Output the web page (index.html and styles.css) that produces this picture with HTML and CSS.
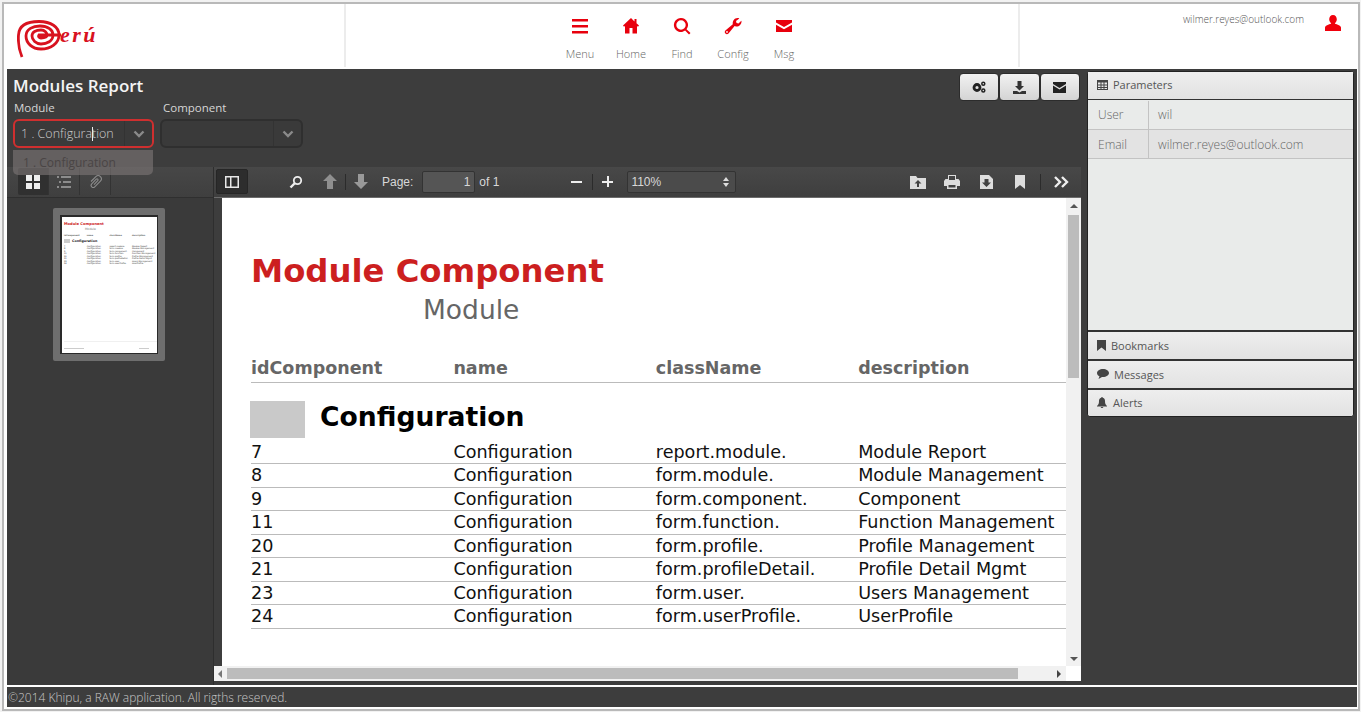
FILE: index.html
```html
<!DOCTYPE html>
<html lang="en">
<head>
  <meta charset="UTF-8">
  <meta name="viewport" content="width=device-width, initial-scale=1.0">
  <link rel="stylesheet" href="styles.css">
  <title>Modules Report</title>
</head>
<body>

<div class="frame">

  <header class="topbar">
    <div class="logo">
      <svg width="44" height="38" viewBox="0 0 44 38">
        <path d="M5 37 C2 30 1 22 1.500 15 C2 5 10 1.500 22 1.500 C34 1.500 42 7 42 15 C42 24 33 29 24 29 C15 29 9 23 9 16 C9 9 16 6 23 6 C31 6 36 10 36 15 C36 21 30 24 24 24 C19 24 15 20 15 16 C15 12 19 10 24 10 C28 10 30 13 30 15 C30 17 27 18 24 18 C22 18 21 16.500 22 15 L44 15" fill="none" stroke="#d8121f" stroke-width="2.800"/>
      </svg>
      <span class="logo-text">erú</span>
    </div>
    <nav class="mainnav">
      <a class="navitem">
        <svg class="navicon" viewBox="0 0 18 18"><path d="M1 2h16v2.600H1zM1 8h16v2.600H1zM1 14h16v2.600H1z"/></svg>
        <span>Menu</span>
      </a>
      <a class="navitem">
        <svg class="navicon" viewBox="0 0 18 18"><path d="M9 1 1 8.500l1 1.200L3 9v7.500h4.500V11h3v5.500H15V9l1 .7 1-1.200-2.500-2.300V2h-2v2.400z"/></svg>
        <span>Home</span>
      </a>
      <a class="navitem">
        <svg class="navicon" viewBox="0 0 18 18"><path fill-rule="evenodd" d="M8 1a7 7 0 0 1 5.500 11.300L17.500 16 16 17.500l-3.900-3.900A7 7 0 1 1 8 1zm0 2.300a4.700 4.700 0 1 0 0 9.400 4.700 4.700 0 0 0 0-9.400z"/></svg>
        <span>Find</span>
      </a>
      <a class="navitem">
        <svg class="navicon" viewBox="0 0 18 18"><path fill-rule="evenodd" d="M17.500 4.500c0 3-2.500 5.300-5.500 5-.5 0-1-.2-1.400-.4L4.500 16.600c-.9.900-2.300.9-3.100 0-.9-.9-.8-2.200 0-3l7.400-6.300C8.300 4 10.500 1 13.500 1c.8 0 1.300.1 1.800.4L12 4l.5 2 2 .5 2.800-2.700c.1.200.2.400.2.700zM3 14a.9.9 0 1 0 0 1.800A.9.9 0 0 0 3 14z"/></svg>
        <span>Config</span>
      </a>
      <a class="navitem">
        <svg class="navicon" viewBox="0 0 18 18"><path d="M1 3h16v2.500L9 10 1 5.500zM1 7.800 9 12.300l8-4.500V15H1z"/></svg>
        <span>Msg</span>
      </a>
    </nav>
    <div class="userbox">
      <span class="useremail">wilmer.reyes@outlook.com</span>
      <svg class="usericon" viewBox="0 0 16 16"><path d="M8 0c2.400 0 3.800 2 3.800 4.300 0 1.700-.8 3.200-2 4 .3 1.200 5.700 1.400 6.200 4.200V16H0v-3.500c.5-2.800 5.900-3 6.200-4.200-1.200-.8-2-2.300-2-4C4.200 2 5.600 0 8 0z"/></svg>
    </div>
  </header>

  <main class="workspace">

    <section class="report">
      <div class="report-head">
        <div class="report-filters">
          <h1 class="report-title">Modules Report</h1>
          <div class="filters">
            <div class="field field-module">
              <label>Module</label>
              <div class="combo combo-active">
                <span class="combo-value">1 . Configura<i class="caret"></i>tion</span>
                <span class="combo-arrow"><svg width="12" height="8" viewBox="0 0 12 8"><path d="M1.500 1.500 6 6l4.500-4.500" fill="none" stroke="#8a8a8a" stroke-width="2.400"/></svg></span>
              </div>
            </div>
            <div class="field">
              <label>Component</label>
              <div class="combo">
                <span class="combo-value"></span>
                <span class="combo-arrow"><svg width="12" height="8" viewBox="0 0 12 8"><path d="M1.500 1.500 6 6l4.500-4.500" fill="none" stroke="#8a8a8a" stroke-width="2.400"/></svg></span>
              </div>
            </div>
          </div>
        </div>
        <div class="actions">
          <button class="actionbtn"><svg width="14" height="12" viewBox="0 0 14 12"><circle cx="5" cy="6.500" r="3" fill="none" stroke="#222" stroke-width="2.800"/><circle cx="11.300" cy="2.700" r="1.500" fill="none" stroke="#222" stroke-width="1.500"/><circle cx="11.300" cy="9.400" r="1.500" fill="none" stroke="#222" stroke-width="1.500"/></svg></button>
          <button class="actionbtn"><svg width="13" height="13" viewBox="0 0 13 13"><path d="M4.500 0h4v5H11L6.500 9.500 2 5h2.500zM0 10h4l2.500 1.500L9 10h4v3H0z" fill="#333"/></svg></button>
          <button class="actionbtn"><svg width="13" height="11" viewBox="0 0 13 11"><path d="M0 0h13v2L6.500 6 0 2zM0 3.500 6.500 7.500 13 3.500V11H0z" fill="#222"/></svg></button>
        </div>
      </div>

      <div class="dropdown">1 . Configuration</div>

      <div class="viewer">
        <aside class="sidebar">
          <div class="sidebar-tools">
            <span class="sidetool sidetool-on"><svg width="14" height="14" viewBox="0 0 14 14"><path d="M0 0h6v6H0zM8 0h6v6H8zM0 8h6v6H0zM8 8h6v6H8z" fill="#eee"/></svg></span>
            <span class="sidetool"><svg width="14" height="14" viewBox="0 0 14 14"><path d="M0 1h2v2H0zM4 1h10v2H4zM2 6h2v2H2zM6 6h8v2H6zM0 11h2v2H0zM4 11h10v2H4z" fill="#8c8c8c"/></svg></span>
            <span class="sidetool"><svg width="17" height="17" viewBox="0 0 16 16"><path d="M5 11V4.500a3 3 0 0 1 6 0V12a2 2 0 0 1-4 0V6a1 1 0 0 1 2 0v5" fill="none" stroke="#8c8c8c" stroke-width="1" transform="rotate(45 8 8)"/></svg></span>
          </div>
          <div class="thumbs">
            <div class="thumb">
              <div class="thumb-page">
                <div class="thumb-title">Module Component</div>
                <div class="thumb-sub">Module</div>
                <div class="thumb-row thumb-head"><span>idComponent</span><span>name</span><span>className</span><span>description</span></div>
                <div class="thumb-group"><i></i>Configuration</div>
                <div class="thumb-row"><span>7</span><span>Configuration</span><span>report.module.</span><span>Module Report</span></div>
                <div class="thumb-row"><span>8</span><span>Configuration</span><span>form.module.</span><span>Module Management</span></div>
                <div class="thumb-row"><span>9</span><span>Configuration</span><span>form.component.</span><span>Component</span></div>
                <div class="thumb-row"><span>11</span><span>Configuration</span><span>form.function.</span><span>Function Management</span></div>
                <div class="thumb-row"><span>20</span><span>Configuration</span><span>form.profile.</span><span>Profile Management</span></div>
                <div class="thumb-row"><span>21</span><span>Configuration</span><span>form.profileDetail.</span><span>Profile Detail Mgmt</span></div>
                <div class="thumb-row"><span>23</span><span>Configuration</span><span>form.user.</span><span>Users Management</span></div>
                <div class="thumb-row"><span>24</span><span>Configuration</span><span>form.userProfile.</span><span>UserProfile</span></div>
                <div class="thumb-foot"><i></i><i></i></div>
              </div>
            </div>
          </div>
        </aside>

        <div class="docpane">
          <div class="doctools">
            <span class="toolbtn toolbtn-on"><svg width="14" height="14" viewBox="0 0 14 14"><path fill-rule="evenodd" d="M0 1h14v12H0zM1.500 2.500v9h3.500v-9zM6.500 2.500v9H12.500v-9z" fill="#e8e8e8"/></svg></span>
            <svg class="tool-find" width="14" height="14" viewBox="0 0 14 14"><circle cx="8.500" cy="5.500" r="3.700" fill="none" stroke="#eee" stroke-width="1.800"/><path d="M6 8 1.500 12.500" stroke="#eee" stroke-width="2.400"/></svg>
            <svg class="tool-up" width="16" height="15" viewBox="0 0 16 15"><path d="M8 0l7 7h-4v8H5V7H1z" fill="#8f8f8f"/></svg>
            <i class="toolsep"></i>
            <svg class="tool-down" width="16" height="15" viewBox="0 0 16 15"><path d="M8 15l7-7h-4V0H5v8H1z" fill="#999"/></svg>
            <label class="pagelabel">Page:</label>
            <span class="pagebox">1</span>
            <span class="pagecount">of 1</span>
            <span class="zoomout"></span>
            <i class="toolsep toolsep-zoom"></i>
            <span class="zoomin"></span>
            <span class="scalebox">110%<svg width="6" height="10" viewBox="0 0 6 10"><path d="M3 0l3 4H0zM3 10 0 6h6z" fill="#ddd"/></svg></span>
            <span class="toolspace"></span>
            <svg class="tool-right" width="16" height="14" viewBox="0 0 16 14"><path fill-rule="evenodd" d="M0 1h6l1.500 2H16v11H0zM8 5 4.500 8.500H7V12h2V8.500h2.500z" fill="#ddd"/></svg>
            <svg class="tool-right tool-print" width="16" height="14" viewBox="0 0 16 14"><path fill-rule="evenodd" d="M4 0h8v4h2.500L16 6v5h-3v3H3v-3H0V6l1.500-2H4zM5 1v4h6V1zM4.500 10v2.500h7V10z" fill="#ddd"/></svg>
            <svg class="tool-right tool-file" width="13" height="14" viewBox="0 0 13 14"><path fill-rule="evenodd" d="M0 0h9l4 4v10H0zM4.500 4v3.500H2L6.500 12 11 7.500H8.500V4z" fill="#ddd"/></svg>
            <svg class="tool-right tool-mark" width="10" height="14" viewBox="0 0 10 14"><path d="M0 0h10v14L5 10 0 14z" fill="#ddd"/></svg>
            <i class="toolsep toolsep-right"></i>
            <svg class="tool-more" width="15" height="12" viewBox="0 0 15 12"><path d="M1 1 6 6l-5 5M8 1l5 5-5 5" fill="none" stroke="#eee" stroke-width="2.400"/></svg>
          </div>

          <div class="docbody">
            <div class="pagewrap">
              <article class="pdfpage">
                <h2 class="pdf-title">Module Component</h2>
                <div class="pdf-subtitle">Module</div>
                <div class="pdf-row pdf-head"><span>idComponent</span><span>name</span><span>className</span><span>description</span></div>
                <div class="pdf-group"><i class="pdf-box"></i>Configuration</div>
                <div class="pdf-row"><span>7</span><span>Configuration</span><span>report.module.</span><span>Module Report</span></div>
                <div class="pdf-row"><span>8</span><span>Configuration</span><span>form.module.</span><span>Module Management</span></div>
                <div class="pdf-row"><span>9</span><span>Configuration</span><span>form.component.</span><span>Component</span></div>
                <div class="pdf-row"><span>11</span><span>Configuration</span><span>form.function.</span><span>Function Management</span></div>
                <div class="pdf-row"><span>20</span><span>Configuration</span><span>form.profile.</span><span>Profile Management</span></div>
                <div class="pdf-row"><span>21</span><span>Configuration</span><span>form.profileDetail.</span><span>Profile Detail Mgmt</span></div>
                <div class="pdf-row"><span>23</span><span>Configuration</span><span>form.user.</span><span>Users Management</span></div>
                <div class="pdf-row"><span>24</span><span>Configuration</span><span>form.userProfile.</span><span>UserProfile</span></div>
              </article>
              <div class="vscroll">
                <i class="arrow-up"></i>
                <div class="vtrack"><div class="vthumb"></div></div>
                <i class="arrow-down"></i>
              </div>
            </div>
            <div class="hscroll">
              <i class="arrow-left"></i>
              <div class="htrack"><div class="hthumb"></div></div>
              <i class="arrow-right"></i>
              <span class="scrollcorner"></span>
            </div>
          </div>
        </div>
      </div>
    </section>

    <aside class="panel">
      <div class="panel-head panel-head-first">
        <svg width="11" height="10" viewBox="0 0 11 10"><path fill-rule="evenodd" d="M0 0h11v10H0zM1 2.500V4.500h2.500v-2zM4.500 2.500V4.500h2v-2zM7.500 2.500V4.500H10v-2zM1 5.500v1.500h2.500V5.500zM4.500 5.500v1.500h2V5.500zM7.500 5.500v1.500H10V5.500zM1 8v1h2.500V8zM4.500 8v1h2V8zM7.500 8v1H10V8z" fill="#444"/></svg>
        Parameters
      </div>
      <div class="panel-body">
        <div class="param-row"><span class="param-name">User</span><span class="param-value">wil</span></div>
        <div class="param-row param-row-alt"><span class="param-name">Email</span><span class="param-value">wilmer.reyes@outlook.com</span></div>
      </div>
      <div class="panel-head">
        <svg width="9" height="11" viewBox="0 0 9 11"><path d="M0 0h9v11L4.500 7.500 0 11z" fill="#444"/></svg>
        Bookmarks
      </div>
      <div class="panel-head panel-head-msg">
        <svg width="12" height="10" viewBox="0 0 12 10"><path d="M6 0c3.300 0 6 1.800 6 4s-2.700 4-6 4H5L1.500 10l1-2.700C1 6.600 0 5.400 0 4c0-2.200 2.700-4 6-4z" fill="#444"/></svg>
        Messages
      </div>
      <div class="panel-head panel-head-last">
        <svg width="10" height="11" viewBox="0 0 10 11"><path d="M5 0c.5 0 .8.300.8.800C7.500 1.200 8 2.500 8 4c0 2.500.5 3.500 2 5v.5H0V9c1.500-1.500 2-2.500 2-5 0-1.500.5-2.800 2.200-3.200C4.200.3 4.500 0 5 0zM3.700 10h2.600C6.200 10.600 5.700 11 5 11s-1.200-.4-1.300-1z" fill="#444"/></svg>
        Alerts
      </div>
    </aside>

  </main>

  <footer class="statusbar">©2014 Khipu, a RAW application. All rigths reserved.</footer>

</div>

</body>
</html>
```

FILE: styles.css
```css
* {
  box-sizing: border-box;
}

html, body {
  height: 100%;
}

body {
  margin: 0;
  padding: 2px 1px 1px 2px;
  overflow: hidden;
  background: #f2f2f2;
  font-family: "Open Sans", sans-serif;
}

.frame {
  display: flex;
  flex-direction: column;
  height: 100%;
  border: 2px solid #b9b9b9;
  background: #fff;
  padding: 0 1px 2px 3px;
}

/* top bar */
.topbar {
  display: flex;
  height: 63px;
  flex: none;
}

.logo {
  display: flex;
  align-items: flex-start;
  width: 337px;
  padding: 16px 0 0 10px;
  flex: none;
}

.logo-text {
  margin: 2px 0 0 -1px;
  color: #d8121f;
  font: italic bold 22px "Liberation Serif", serif;
  letter-spacing: 2.500px;
}

.mainnav {
  display: flex;
  justify-content: center;
  flex: 1;
  border-left: 2px solid #ececec;
  border-right: 2px solid #ececec;
  padding: 13px 0 0 0;
}

.navitem {
  display: flex;
  flex-direction: column;
  align-items: center;
  width: 51px;
  color: #666;
  font-size: 11px;
  font-weight: 300;
}

.navicon {
  width: 18px;
  height: 18px;
  fill: #e8000d;
  margin-bottom: 11px;
}

.userbox {
  display: flex;
  width: 337px;
  padding: 8px 16px 0 0;
  justify-content: flex-end;
  flex: none;
}

.useremail {
  color: #555;
  font-size: 10px;
  font-weight: 300;
  margin-right: 21px;
}

.usericon {
  width: 16px;
  height: 16px;
  fill: #f0000c;
  margin-top: 3px;
}

/* main area */
.workspace {
  display: flex;
  flex: 1;
  min-height: 0;
  margin-top: 2px;
  background: #3d3d3d;
  position: relative;
}

.report {
  display: flex;
  flex-direction: column;
  width: 1074px;
  flex: none;
}

.report-head {
  display: flex;
  justify-content: space-between;
  height: 98px;
  padding: 4px 1px 0 6px;
  flex: none;
}

.report-title {
  margin: 0;
  color: #f4f4f4;
  font-size: 17px;
  font-weight: 600;
  line-height: 26px;
}

.filters {
  display: flex;
  margin-top: 1px;
}

.field {
  width: 150px;
}

.field-module {
  width: 149px;
}

.field label {
  display: block;
  padding-left: 1px;
  color: #d6d6d6;
  font-size: 11.500px;
  line-height: 16px;
  margin-bottom: 3px;
}

.combo {
  display: flex;
  width: 143px;
  height: 29px;
  border: 2px solid #2f2f2f;
  border-radius: 6px;
  background: #3a3a3a;
  color: #ccc;
  margin-left: -2px;
}

.combo-active {
  width: 141px;
  margin-left: 0;
  border-color: #cf2f2f;
}

.combo-value {
  flex: 1;
  padding-left: 6px;
  font-size: 12.500px;
  font-weight: 300;
  line-height: 25px;
  white-space: nowrap;
}

.caret {
  display: inline-block;
  width: 1px;
  height: 14px;
  margin-right: -1px;
  vertical-align: -3px;
  background: #eee;
}

.combo-arrow {
  display: flex;
  align-items: center;
  justify-content: center;
  width: 28px;
  border-left: 1px solid #333;
}

.actions {
  display: flex;
}

.actionbtn {
  display: flex;
  align-items: center;
  justify-content: center;
  width: 40.500px;
  height: 28px;
  padding: 0;
  border: 1px solid #2c2c2c;
  border-radius: 4px;
  background: linear-gradient(#f2f2f2, #d4d4d4);
}

.dropdown {
  position: absolute;
  left: 6px;
  top: 81px;
  width: 140px;
  height: 25px;
  padding-left: 10px;
  border-radius: 0 0 5px 5px;
  background: rgba(125, 118, 118, 0.62);
  color: #4a4545;
  font-size: 12px;
  line-height: 25px;
  z-index: 2;
}

.viewer {
  display: flex;
  flex: 1;
  min-height: 0;
}

/* thumbnails */
.sidebar {
  display: flex;
  flex-direction: column;
  width: 207px;
  flex: none;
  border-right: 1px solid #2e2e2e;
}

.sidebar-tools {
  display: flex;
  height: 31px;
  padding: 1px 0 0 11px;
  border-bottom: 1px solid #2f2f2f;
  background: linear-gradient(#474747, #3f3f3f);
}

.sidetool {
  display: flex;
  align-items: center;
  justify-content: center;
  width: 31px;
  height: 27px;
  border-right: 1px solid #333;
}

.sidetool-on {
  background: #303030;
  border-radius: 2px 0 0 2px;
}

.thumbs {
  flex: 1;
  padding: 10px 0 0 46px;
  background: #3a3a3a;
}

.thumb {
  width: 112px;
  height: 153px;
  padding: 7px;
  border-radius: 2px;
  background: #6e6e6e;
}

.thumb-page {
  display: flex;
  flex-direction: column;
  height: 139px;
  padding: 5px 0 4px 2px;
  border: 1px solid #2a2a2a;
  border-width: 2px 1px 1px 2px;
  background: #fff;
  font-family: "DejaVu Sans", sans-serif;
  font-size: 2.100px;
  line-height: 2.500px;
  color: #333;
}

.thumb-title {
  color: #cc2222;
  font-size: 3.650px;
  font-weight: bold;
  line-height: 5px;
}

.thumb-sub {
  margin-left: 21px;
  color: #777;
  font-size: 3px;
  line-height: 4px;
  margin-bottom: 3px;
}

.thumb-row {
  display: grid;
  grid-template-columns: 22.700px 22.700px 22.700px 24px;
  white-space: nowrap;
}

.thumb-head {
  color: #666;
  font-weight: bold;
}

.thumb-group {
  display: flex;
  align-items: center;
  margin: 2px 0 1px;
  color: #222;
  font-size: 3.300px;
  font-weight: bold;
  line-height: 5px;
}

.thumb-group i {
  width: 6px;
  height: 4px;
  margin-right: 2px;
  background: #ccc;
}

.thumb-foot {
  display: flex;
  justify-content: space-between;
  margin-top: auto;
  padding: 6px 8px 0 0;
  border-top: 1px solid #f0f0f0;
}

.thumb-foot i {
  width: 20px;
  height: 1px;
  background: #ccc;
}

.thumb-foot i + i {
  width: 10px;
}

/* pdf viewer */
.docpane {
  display: flex;
  flex-direction: column;
  flex: 1;
  min-width: 0;
}

.doctools {
  display: flex;
  align-items: center;
  height: 31px;
  flex: none;
  background: linear-gradient(#484848, #3e3e3e);
  box-shadow: inset 0 -1px 0 #6c6c6c;
  color: #d8d8d8;
  font: 12px "Liberation Sans", sans-serif;
  padding: 0 0 2px 2px;
}

.toolbtn {
  display: flex;
  align-items: center;
  justify-content: center;
  width: 32px;
  height: 25px;
  flex: none;
}

.toolbtn-on {
  background: #2d2d2d;
  border: 1px solid #262626;
  border-radius: 2px;
}

.tool-find {
  margin-left: 41px;
}

.tool-up {
  margin-left: 19px;
}

.toolsep {
  width: 1px;
  height: 16px;
  margin: 0 7px;
  background: #2b2b2b;
  flex: none;
}

.tool-down {
  margin-left: 0;
}

.pagelabel {
  margin-left: 13px;
}

.pagebox {
  width: 53px;
  height: 22px;
  margin-left: 9px;
  padding-right: 4px;
  border: 1px solid #333;
  border-radius: 2px;
  background: #555;
  line-height: 20px;
  text-align: right;
}

.pagecount {
  margin-left: 4px;
}

.zoomout {
  width: 11px;
  height: 2px;
  margin-left: 72px;
  background: #eee;
  flex: none;
}

.toolsep-zoom {
  margin: 0 9px 0 10px;
}

.zoomin {
  width: 11px;
  height: 11px;
  background: linear-gradient(#eee, #eee) center / 11px 2px no-repeat,
    linear-gradient(#eee, #eee) center / 2px 11px no-repeat;
  flex: none;
}

.scalebox {
  display: flex;
  align-items: center;
  justify-content: space-between;
  width: 109px;
  height: 22px;
  margin-left: 14px;
  padding: 0 6px 0 3px;
  border: 1px solid #333;
  border-radius: 2px;
  background: #4b4b4b;
}

.toolspace {
  flex: 1;
}

.tool-right {
  margin-right: 18px;
}

.tool-print {
  margin-right: 20px;
}

.tool-file {
  margin-right: 22px;
}

.tool-mark {
  margin-right: 15px;
}

.toolsep-right {
  margin: 0 13px 0 0;
}

.tool-more {
  margin-right: 12px;
}

.docbody {
  display: flex;
  flex-direction: column;
  flex: 1;
  min-height: 0;
  padding-bottom: 4px;
}

.pagewrap {
  display: flex;
  flex: 1;
  min-height: 0;
}

.pdfpage {
  flex: 1;
  min-width: 0;
  margin-left: 8px;
  padding: 54px 0 0 29px;
  background: #fff;
  overflow: hidden;
  font-family: "DejaVu Sans", sans-serif;
  color: #111;
}

.pdf-title {
  margin: 0;
  color: #cc1f1f;
  font-size: 32.300px;
  font-weight: bold;
  line-height: 38px;
  white-space: nowrap;
}

.pdf-subtitle {
  margin: 4px 0 0 172px;
  color: #666;
  font-size: 26.500px;
  line-height: 32px;
}

.pdf-row {
  display: grid;
  grid-template-columns: repeat(4, 202.400px);
  height: 23.500px;
  font-size: 17.600px;
  line-height: 22px;
  border-bottom: 1px solid #bbb;
  white-space: nowrap;
}

.pdf-head {
  height: 28px;
  margin-top: 29px;
  color: #666;
  font-size: 17.500px;
  font-weight: bold;
  line-height: 27px;
}

.pdf-group {
  display: flex;
  align-items: flex-start;
  height: 37px;
  margin: 18px 0 2.500px -1px;
  color: #000;
  font-size: 26.600px;
  font-weight: bold;
  line-height: 32px;
}

.pdf-box {
  width: 55px;
  height: 37px;
  margin-right: 15px;
  background: #c9c9c9;
}

/* scroll bars */
.vscroll {
  display: flex;
  flex-direction: column;
  align-items: center;
  width: 15px;
  flex: none;
  background: #f1f1f1;
}

.vtrack {
  flex: 1;
  width: 100%;
  padding: 4px 2px 0 2px;
}

.vthumb {
  height: 163px;
  background: #bcbcbc;
}

.arrow-up, .arrow-down, .arrow-left, .arrow-right {
  width: 0;
  height: 0;
  flex: none;
  border-style: solid;
  border-color: transparent;
}

.arrow-up {
  margin: 6px 0 3px;
  border-width: 0 4px 4px;
  border-bottom-color: #555;
}

.arrow-down {
  margin: 3px 0 5px;
  border-width: 4px 4px 0;
  border-top-color: #555;
}

.hscroll {
  display: flex;
  align-items: center;
  height: 15px;
  flex: none;
  background: #f1f1f1;
}

.arrow-left {
  margin: 0 5px 0 4px;
  border-width: 4px 4px 4px 0;
  border-right-color: #777;
}

.arrow-right {
  margin: 0 5px 0 5px;
  border-width: 4px 0 4px 4px;
  border-left-color: #444;
}

.htrack {
  flex: 1;
  height: 100%;
  padding: 2px 0;
}

.hthumb {
  width: 791px;
  height: 100%;
  background: #bcbcbc;
}

.scrollcorner {
  width: 15px;
  height: 15px;
  background: #fff;
}

/* right panel */
.panel {
  display: flex;
  flex-direction: column;
  width: 267px;
  height: 346px;
  flex: none;
  margin: 2px 0 0 6px;
  border: 1px solid #222;
  border-radius: 3px;
  background: #e9ebea;
  color: #555;
  font-size: 11px;
}

.panel-head {
  display: flex;
  align-items: center;
  gap: 5px;
  height: 29px;
  flex: none;
  padding: 0 0 1px 9px;
  border-top: 2px solid #333;
  background: linear-gradient(#eeeeee, #e2e2e2);
  color: #555;
}

.panel-head-first {
  height: 28px;
  border-top: 0;
  border-bottom: 1px solid #333;
  padding-bottom: 2px;
}

.panel-head-last {
  gap: 6px;
  height: 28px;
  border-radius: 0 0 3px 3px;
}

.panel-body {
  flex: 1;
  padding-top: 1px;
}

.param-row {
  display: flex;
  height: 29px;
  border-bottom: 1px solid #c3c3c3;
  color: #666;
  font-size: 12px;
  font-weight: 300;
  line-height: 28px;
}

.param-row-alt {
  background: #e3e3e3;
  line-height: 30px;
}

.param-name {
  width: 61px;
  padding-left: 10px;
  border-right: 1px solid #c3c3c3;
}

.param-value {
  padding-left: 9px;
}

/* footer */
.statusbar {
  height: 20px;
  flex: none;
  margin-top: 2px;
  padding-left: 1px;
  background: #3d3d3d;
  color: #c8c8c8;
  font-size: 12px;
  font-weight: 300;
  line-height: 21px;
}
```
